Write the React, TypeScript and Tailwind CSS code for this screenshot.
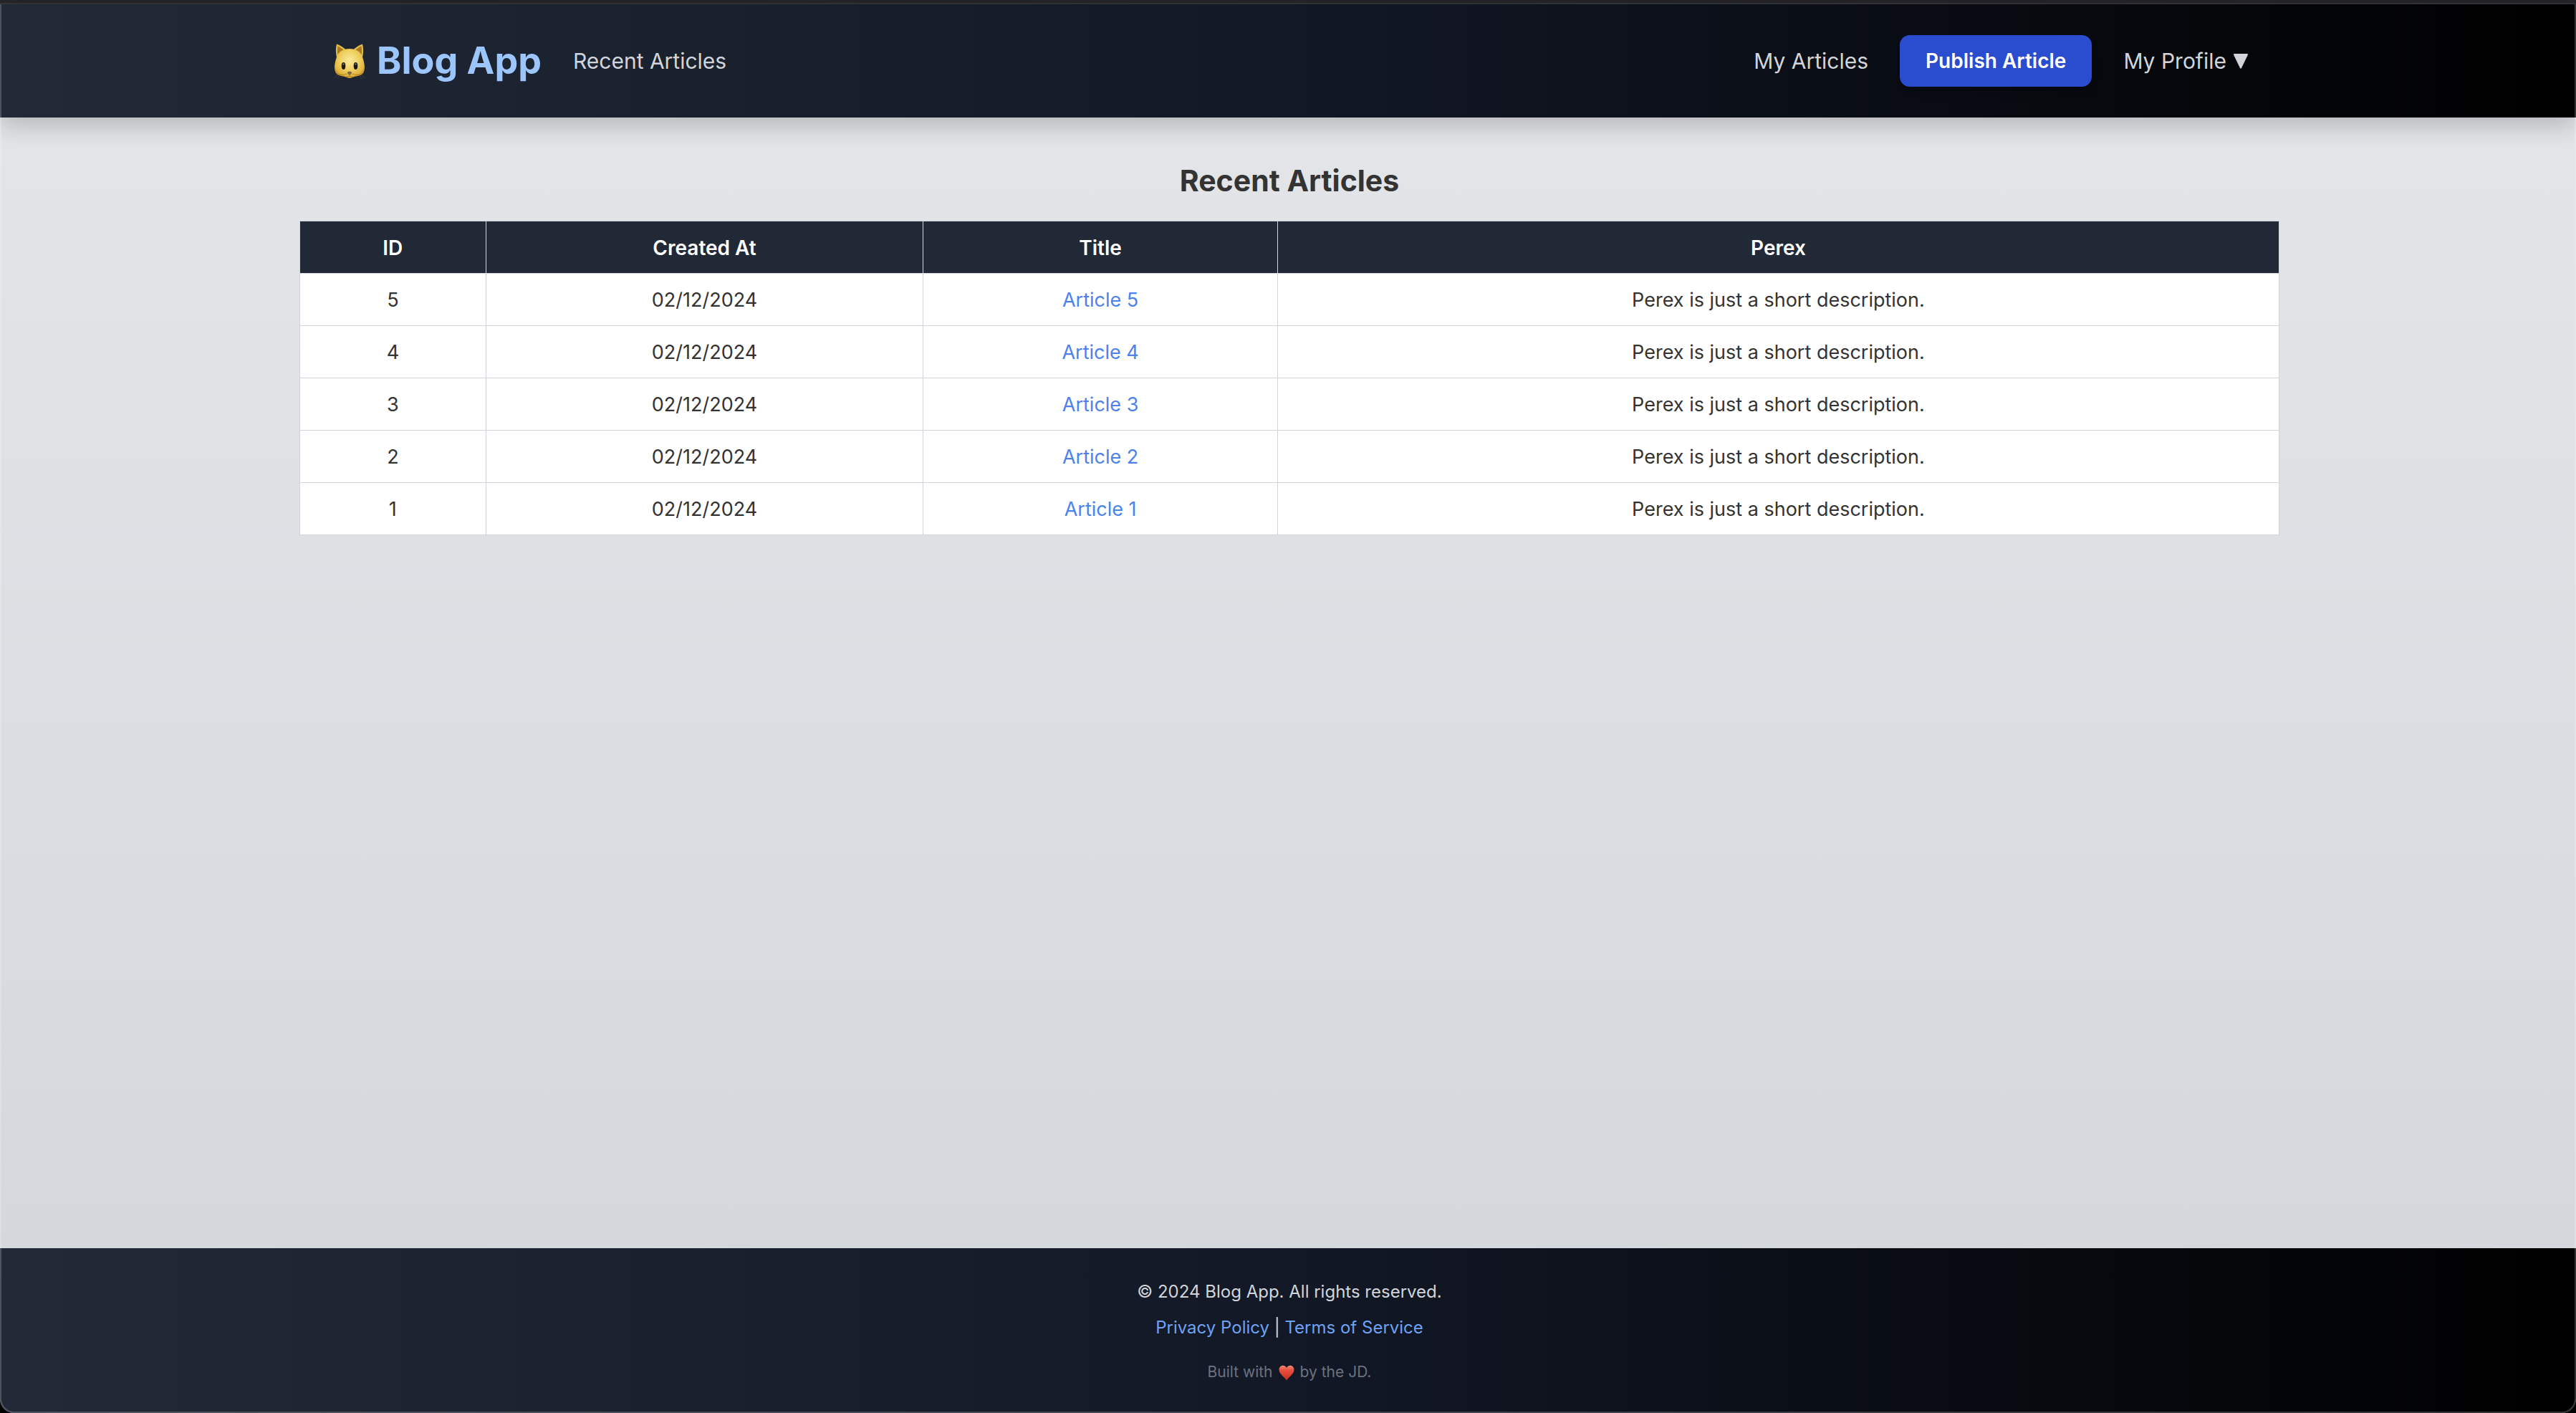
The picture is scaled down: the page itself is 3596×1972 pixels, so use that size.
import type { ReactNode } from 'react';

const articles = [5, 4, 3, 2, 1].map((id) => ({
  id,
  createdAt: '02/12/2024',
  title: `Article ${id}`,
  perex: 'Perex is just a short description.',
}));

function CatFace() {
  return (
    <svg viewBox="0 0 44 50" className="h-[50px] w-[44px] shrink-0" aria-hidden="true">
      <defs>
        <radialGradient id="cat-fur" cx="0.5" cy="0.4" r="0.62">
          <stop offset="0" stopColor="#fbea9a" />
          <stop offset="0.5" stopColor="#f0d264" />
          <stop offset="0.85" stopColor="#e0b43c" />
          <stop offset="1" stopColor="#b98a26" />
        </radialGradient>
      </defs>
      <path d="M4 20C2.500 13 2.500 6 4.200 1.500C9 3 14.500 6.500 18 11L8 21Z" fill="#e3bb4a" />
      <path d="M40 20C41.500 13 41.500 6 39.800 1.500C35 3 29.500 6.500 26 11L36 21Z" fill="#e3bb4a" />
      <path d="M5.500 18C4.800 12 4.800 8 5.600 4.500C9 6 12 8 14.500 11Z" fill="#a97a22" />
      <path d="M38.500 18C39.200 12 39.200 8 38.400 4.500C35 6 32 8 29.500 11Z" fill="#a97a22" />
      <path
        d="M22 8C31 8 37.500 12 40 19.500C42.500 27 44 34 42 40C39.500 46.500 32 46 28 47.200C25.500 48 24 49 22 49C20 49 18.500 48 16 47.200C12 46 4.500 46.500 2 40C0 34 1.500 27 4 19.500C6.500 12 13 8 22 8Z"
        fill="url(#cat-fur)"
      />
      <path d="M7 43.500Q13 45.500 18.500 43M37 43.500Q31 45.500 25.500 43" fill="none" stroke="#b78a2c" strokeWidth="1.200" />
      <path d="M5 44L1 49M8 45.500L5 49.500M39 44L43 49M36 45.500L39 49.500" stroke="#5a4a28" strokeWidth="0.700" />
      <ellipse cx="13.500" cy="32" rx="2.800" ry="5" fill="#1c1a16" />
      <ellipse cx="30.500" cy="32" rx="2.800" ry="5" fill="#1c1a16" />
      <circle cx="13.500" cy="29.500" r="1.100" fill="#8c8a86" />
      <circle cx="30.500" cy="29.500" r="1.100" fill="#8c8a86" />
      <path d="M19 40.500Q22 39 25 40.500Q25 43.500 22 44.800Q19 43.500 19 40.500Z" fill="#7d6547" />
      <path d="M22 44.500V46M18.500 46.500Q20.500 47.500 22 46Q23.500 47.500 25.500 46.500" fill="none" stroke="#a87c2a" strokeWidth="1" />
    </svg>
  );
}

function Heart() {
  return (
    <svg viewBox="0 0 22 22" className="mx-2 inline-block h-[22px] w-[22px]" role="img" aria-label="love">
      <defs>
        <linearGradient id="heart-fill" x1="0" y1="0" x2="0" y2="1">
          <stop offset="0" stopColor="#f08a7c" />
          <stop offset="0.3" stopColor="#ea5240" />
          <stop offset="1" stopColor="#c72c1c" />
        </linearGradient>
      </defs>
      <path
        d="M11 21.500C8 16.500 0.500 12.500 0.500 6.500C0.500 3 3 0.700 6 0.700C8.300 0.700 10.200 2 11 4C11.800 2 13.700 0.700 16 0.700C19 0.700 21.500 3 21.500 6.500C21.500 12.500 14 16.500 11 21.500Z"
        fill="url(#heart-fill)"
      />
    </svg>
  );
}

function NavLink({ children }: { children: ReactNode }) {
  return (
    <a href="#" className="text-[30px] leading-[48px] text-[#d1d5db]">
      {children}
    </a>
  );
}

function Header() {
  return (
    <header className="relative z-10 h-[158px] bg-linear-to-r/srgb from-[#222a37] via-[#121826] to-black pl-1 shadow-[0_12px_32px_rgba(0,0,0,0.2)]">
      <nav className="mx-auto flex h-full max-w-[2764px] items-center justify-between pr-11 pl-12">
        <div className="flex items-center gap-11">
          <a href="#" className="flex items-center gap-4 text-[52px] leading-[72px] font-bold text-[#9cc5fb]">
            <CatFace />
            Blog App
          </a>
          <NavLink>Recent Articles</NavLink>
        </div>
        <div className="flex items-center gap-11">
          <NavLink>My Articles</NavLink>
          <button
            type="button"
            className="h-[72px] rounded-[14px] bg-[#2a4dd0] px-9 text-[28px] font-semibold text-white shadow-lg"
          >
            Publish Article
          </button>
          <button type="button" className="flex items-center gap-[10px] text-[30px] leading-[48px] text-[#d1d5db]">
            My Profile
            <svg viewBox="0 0 20 21" className="h-[21px] w-5" aria-hidden="true">
              <path d="M1 0H19Q20.300 0.300 19.800 1.800L11 20Q10 21.500 9 20L0.200 1.800Q-0.300 0.300 1 0Z" fill="#d1d5db" />
            </svg>
          </button>
        </div>
      </nav>
    </header>
  );
}

const cell = 'h-[73px] border border-[#d1d5db] pt-[2px] text-center';

function ArticleTable() {
  return (
    <table className="w-full table-fixed border-collapse bg-white text-[27px] leading-[40px] text-[#333333]">
      <colgroup>
        <col className="w-[9.4%]" />
        <col className="w-[22.1%]" />
        <col className="w-[17.9%]" />
        <col />
      </colgroup>
      <thead className="bg-[#212936] text-[28px] text-white">
        <tr>
          {['ID', 'Created At', 'Title', 'Perex'].map((label) => (
            <th key={label} scope="col" className={`${cell} font-semibold`}>
              {label}
            </th>
          ))}
        </tr>
      </thead>
      <tbody>
        {articles.map((a) => (
          <tr key={a.id}>
            <td className={cell}>{a.id}</td>
            <td className={cell}>{a.createdAt}</td>
            <td className={cell}>
              <a href="#" className="text-[#4b82ee]">
                {a.title}
              </a>
            </td>
            <td className={cell}>{a.perex}</td>
          </tr>
        ))}
      </tbody>
    </table>
  );
}

function Footer() {
  return (
    <footer className="bg-linear-to-r/srgb from-[#222a37] via-[#121826] to-black pt-9 pb-8 pl-1 text-center text-[24px] leading-[50px] text-[#d1d5db]">
      <p>© 2024 Blog App. All rights reserved.</p>
      <p>
        <a href="#" className="text-[#6fa2f4]">
          Privacy Policy
        </a>{' '}
        |{' '}
        <a href="#" className="text-[#6fa2f4]">
          Terms of Service
        </a>
      </p>
      <p className="mt-3 text-[21px] text-[#6b7280]">
        Built with
        <Heart />
        by the JD.
      </p>
    </footer>
  );
}

export default function App() {
  return (
    <div className="min-h-screen bg-black font-['Inter',sans-serif]">
      <div className="relative flex min-h-screen flex-col overflow-hidden rounded-b-[20px] bg-linear-to-b/srgb from-[#e5e6ea] to-[#d2d6da]">
        <div className="h-[6px] border-b-2 border-[#343438] bg-[#252529]" />
        <Header />
        <main className="flex-1 pt-15 pl-1">
          <div className="mx-auto max-w-[2764px]">
            <h1 className="mb-7 text-center text-[41px] leading-[56px] font-bold text-[#333333]">Recent Articles</h1>
            <ArticleTable />
          </div>
        </main>
        <Footer />
        <div className="pointer-events-none absolute inset-x-0 top-[6px] bottom-0 z-20 rounded-b-[20px] border-x-2 border-b-2 border-white/20" />
      </div>
    </div>
  );
}
